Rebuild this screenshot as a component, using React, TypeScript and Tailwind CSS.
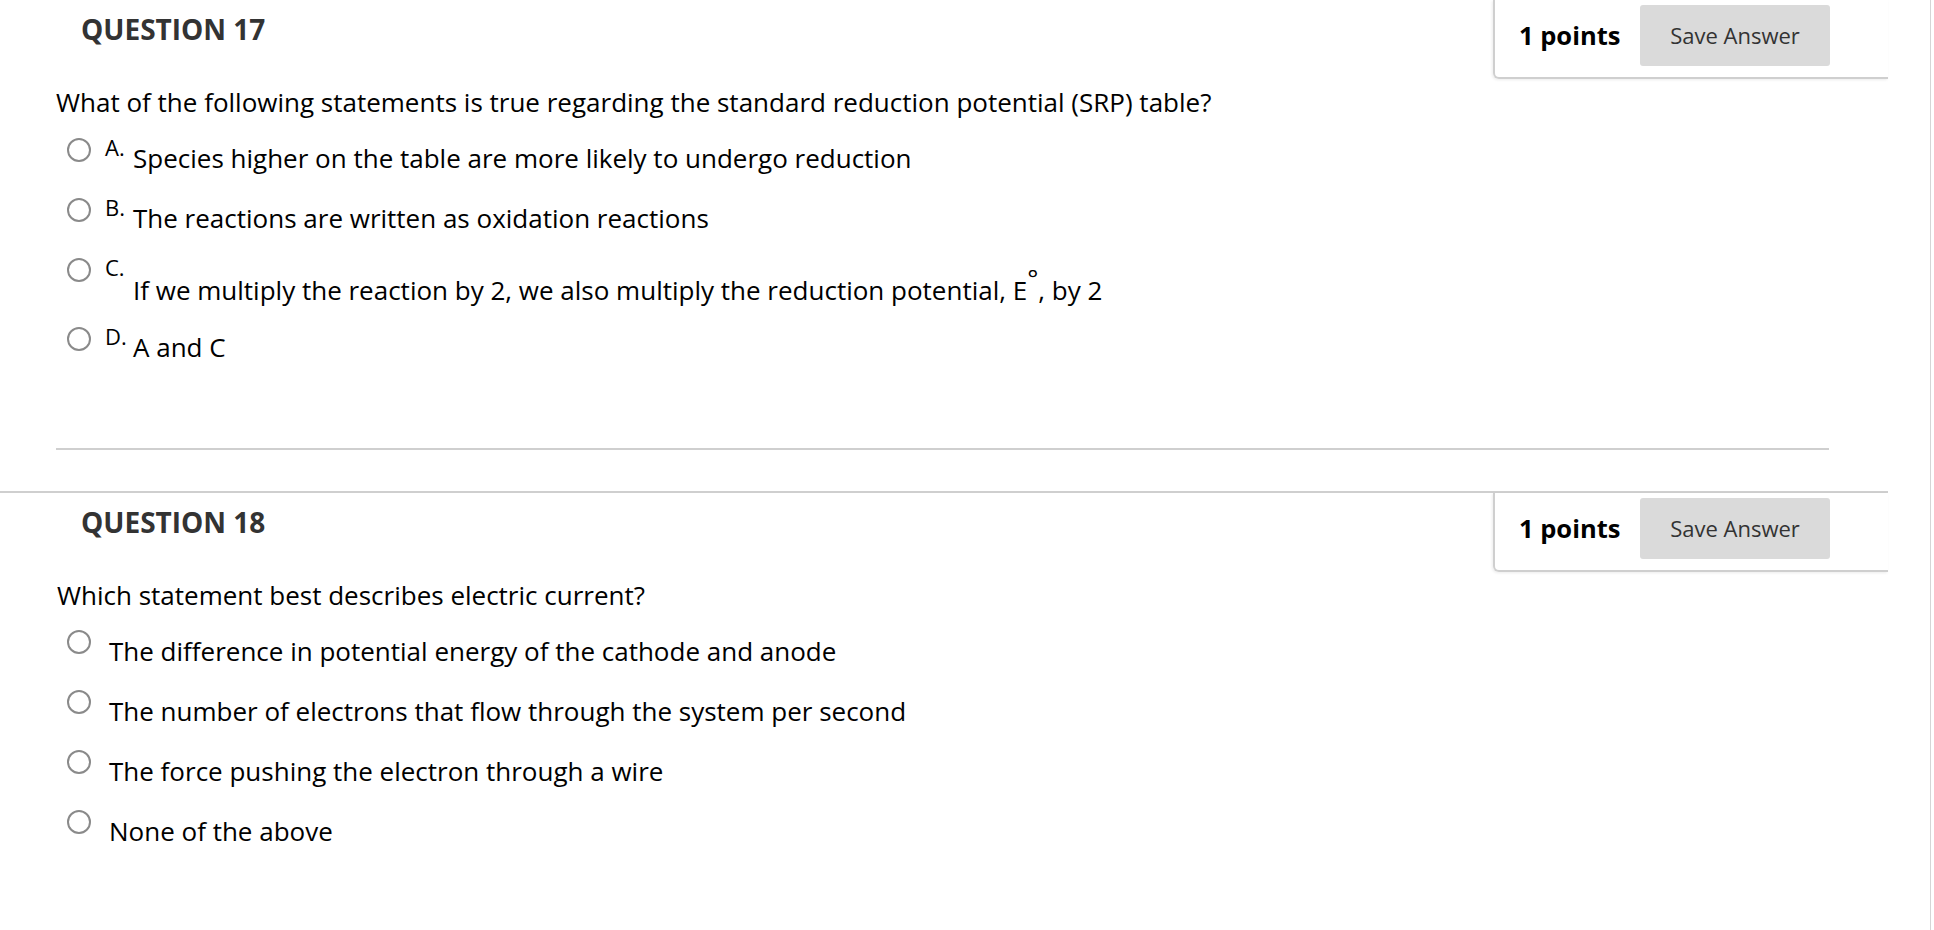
import React from 'react';

type Option = { label?: string; text: React.ReactNode; rowClass?: string; textClass?: string };

const Radio = () => (
  <span className="mt-[7px] block h-[24px] w-[24px] shrink-0 rounded-full border-2 border-[#8a8a8a] bg-white" />
);

const PointsBox = () => (
  <div className="flex h-[79px] w-[395px] shrink-0 items-start rounded-bl-[6px] border-b-2 border-l-2 border-[#cfcfcf] pl-[24px] pt-[5px] shadow-[-1px_1px_3px_rgba(0,0,0,0.08)]">
    <div className="flex h-[61px] items-center">
      <span className="w-[121px] text-[25.5px] font-bold text-black">1 points</span>
      <button className="h-[61px] w-[190px] rounded-[3px] bg-[#dadada] text-[22px] text-[#333]">
        Save Answer
      </button>
    </div>
  </div>
);

const LetterRow = ({ label, text, rowClass = 'h-[60px]', textClass = 'mt-[14px]' }: Option) => (
  <div className={`flex items-start pl-[67px] ${rowClass}`}>
    <Radio />
    <span className="ml-[14px] mt-[5px] w-[28px] shrink-0 text-[22px] leading-none text-black">{label}</span>
    <span className={`text-[26px] leading-none text-black ${textClass}`}>{text}</span>
  </div>
);

const PlainRow = ({ text }: Option) => (
  <div className="flex h-[60px] items-start pl-[67px]">
    <Radio />
    <span className="ml-[18px] mt-[15px] text-[26px] leading-none text-black">{text}</span>
  </div>
);

const QuestionHeader = ({ n }: { n: number }) => (
  <div className="flex justify-between">
    <h3 className="pl-[81px] pt-[15px] text-[28px] font-bold leading-none text-[#333]">QUESTION {n}</h3>
    <PointsBox />
  </div>
);

export default function App() {
  return (
    <div className="flex min-h-screen bg-white font-['Open_Sans',sans-serif]">
      <div className="-mt-[2px] w-[1888px] shrink-0">
        <section className="border-t-2 border-[#cfcfcf]">
          <QuestionHeader n={17} />
          <p className="mt-[5px] pl-[56px] text-[26px] leading-[36px] text-black">
            What of the following statements is true regarding the standard reduction potential (SRP) table?
          </p>
          <div className="mt-[11px]">
            <LetterRow label="A." text="Species higher on the table are more likely to undergo reduction" />
            <LetterRow label="B." text="The reactions are written as oxidation reactions" />
            <LetterRow
              label="C."
              rowClass="h-[69px]"
              textClass="mt-[26px]"
              text={
                <>
                  If we multiply the reaction by 2, we also multiply the reduction potential, E
                  <span className="relative -top-[12px]">°</span>, by 2
                </>
              }
            />
            <LetterRow label="D." rowClass="h-[59px]" text="A and C" />
          </div>
          <div className="ml-[56px] mr-[59px] mt-[69px] border-t-2 border-[#cfcfcf]" />
          <div className="h-[41px]" />
        </section>

        <section className="border-t-2 border-[#cfcfcf]">
          <QuestionHeader n={18} />
          <p className="mt-[5px] pl-[57px] text-[26px] leading-[36px] text-black">
            Which statement best describes electric current?
          </p>
          <div className="mt-[10px]">
            <PlainRow text="The difference in potential energy of the cathode and anode" />
            <PlainRow text="The number of electrons that flow through the system per second" />
            <PlainRow text="The force pushing the electron through a wire" />
            <PlainRow text="None of the above" />
          </div>
        </section>
      </div>
      <div className="w-[43px] shrink-0 border-r border-[#d5d5d5]" />
    </div>
  );
}
